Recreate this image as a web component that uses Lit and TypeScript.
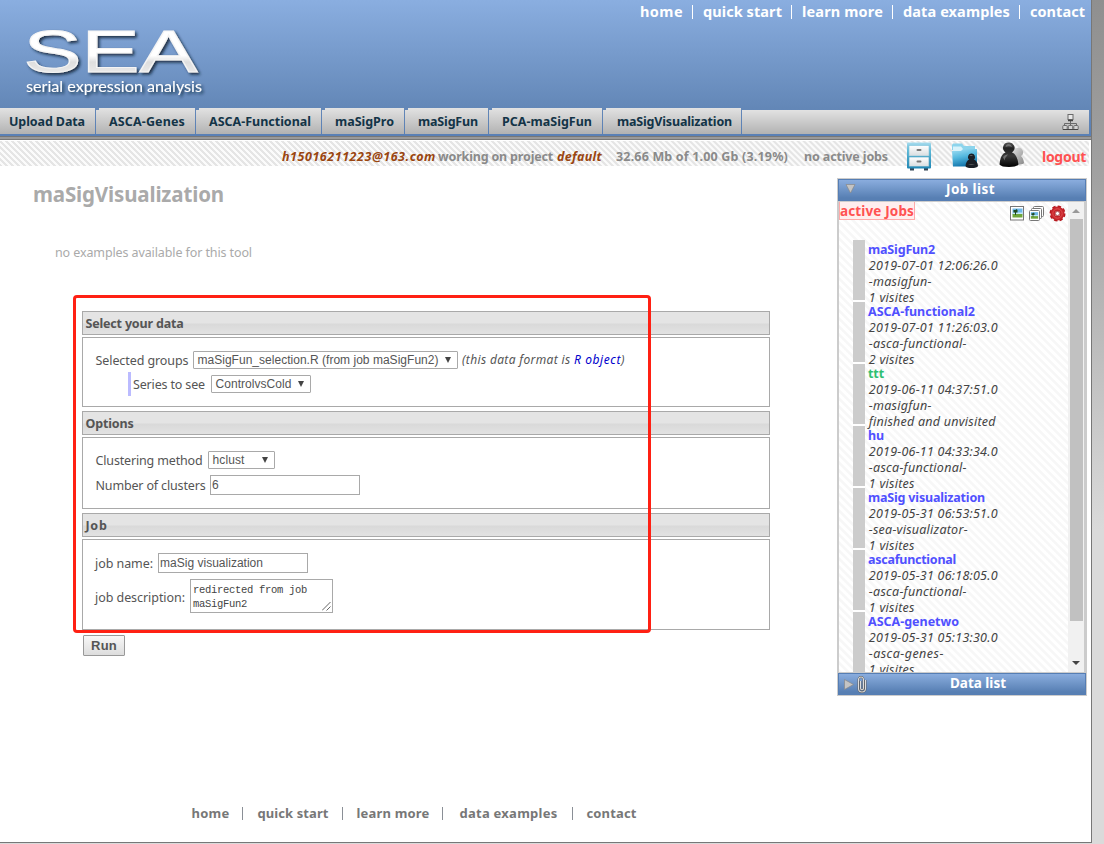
import { LitElement, html, svg, css } from "lit";
import { customElement, property } from "lit/decorators.js";

/** A single line of text whose tracking is adjusted so that it spans a given width. */
@customElement("fit-text")
class FitText extends LitElement {
  @property({ type: Number }) w = 0;
  @property() text = "";

  static styles = css`
    :host { display: inline-block; white-space: pre; flex: none; }
    .t { display: inline-block; }
  `;

  updated() {
    const el = this.renderRoot.querySelector(".t") as HTMLElement;
    el.style.letterSpacing = "0px";
    const natural = el.getBoundingClientRect().width;
    el.style.letterSpacing = (this.w - natural) / this.text.length + "px";
    this.style.width = this.w + "px";
  }

  render() {
    return html`<span class="t">${this.text}</span>`;
  }
}

const fit = (text: string, w: number, cls = "") =>
  html`<fit-text class=${cls} .text=${text} .w=${w}></fit-text>`;

const tabs = [
  { label: "Upload Data", box: 95, pad: 9, w: 76 },
  { label: "ASCA-Genes", box: 99, pad: 13, w: 76 },
  { label: "ASCA-Functional", box: 125, pad: 13, w: 102 },
  { label: "maSigPro", box: 82, pad: 13, w: 59 },
  { label: "maSigFun", box: 83, pad: 13, w: 60 },
  { label: "PCA-maSigFun", box: 113, pad: 13, w: 90 },
  { label: "maSigVisualization", box: 138, pad: 14, w: 115 },
];

const jobs = [
  { name: "maSigFun2", nw: 67, date: "2019-07-01 12:06:26.0", tool: "-masigfun-", tw: 63, state: "1 visites", sw: 46 },
  { name: "ASCA-functional2", nw: 107, date: "2019-07-01 11:26:03.0", tool: "-asca-functional-", tw: 98, state: "2 visites", sw: 46 },
  { name: "ttt", nw: 16, date: "2019-06-11 04:37:51.0", tool: "-masigfun-", tw: 63, state: "finished and unvisited", sw: 127, fresh: true },
  { name: "hu", nw: 16, date: "2019-06-11 04:33:34.0", tool: "-asca-functional-", tw: 98, state: "1 visites", sw: 46 },
  { name: "maSig visualization", nw: 117, date: "2019-05-31 06:53:51.0", tool: "-sea-visualizator-", tw: 99, state: "1 visites", sw: 46 },
  { name: "ascafunctional", nw: 88, date: "2019-05-31 06:18:05.0", tool: "-asca-functional-", tw: 98, state: "1 visites", sw: 46 },
  { name: "ASCA-genetwo", nw: 91, date: "2019-05-31 05:13:30.0", tool: "-asca-genes-", tw: 75, state: "1 visites", sw: 46 },
];

const logo = svg`
<svg width="220" height="84" viewBox="0 0 220 84">
  <defs>
    <linearGradient id="lg" x1="0" y1="0" x2="0" y2="1">
      <stop offset="0.2" stop-color="#fff"/><stop offset="0.56" stop-color="#fff"/>
      <stop offset="0.66" stop-color="#dedede"/><stop offset="0.8" stop-color="#e8e8e8"/>
    </linearGradient>
    <filter id="sh" x="-10%" y="-10%" width="125%" height="135%">
      <feDropShadow dx="2" dy="2" stdDeviation="1.5" flood-color="#0c1a30" flood-opacity="0.85"/>
    </filter>
  </defs>
  <g filter="url(#sh)">
    <text x="8.500" y="51.500" class="sea" textLength="174" lengthAdjust="spacingAndGlyphs" fill="url(#lg)">SEA</text>
  </g>
  <g filter="url(#sh)">
    <text x="11" y="72" class="tag" textLength="176" lengthAdjust="spacingAndGlyphs">serial expression analysis</text>
  </g>
</svg>`;

const sitemap = svg`
<svg width="17" height="17" viewBox="0 0 17 17" fill="#d4d4d4" stroke="#6a6a6a" stroke-width="1">
  <path d="M8.500 7v4M2.500 11V9.500h12V11" fill="none"/>
  <rect x="6" y=".5" width="5" height="5" fill="#e8e8e8"/>
  <path d="M6 6.500h5" stroke="#444" stroke-width="1.500"/>
  <rect x=".8" y="11.500" width="4.400" height="4" rx=".8"/><rect x="6.300" y="11.500" width="4.400" height="4" rx=".8"/><rect x="11.800" y="11.500" width="4.400" height="4" rx=".8"/>
  <path d="M.8 15.500h15.400" stroke="#444"/>
</svg>`;

const cabinet = svg`
<svg width="26" height="29" viewBox="0 0 26 29">
  <defs><linearGradient id="cb" x1="0" y1="0" x2="0" y2="1"><stop offset="0" stop-color="#a8dcee"/><stop offset=".3" stop-color="#5db9d8"/><stop offset="1" stop-color="#1f86b4"/></linearGradient>
  <linearGradient id="cd" x1="0" y1="0" x2="0" y2="1"><stop offset="0" stop-color="#fff"/><stop offset="1" stop-color="#d8dde0"/></linearGradient></defs>
  <rect x="4" y="26" width="4" height="2.500" fill="#345"/><rect x="18" y="26" width="4" height="2.500" fill="#345"/>
  <rect x="1" y="0.500" width="24" height="26" rx="1" fill="url(#cb)"/>
  <rect x="3" y="3.500" width="20" height="10.500" fill="url(#cd)" stroke="#7fc3da" stroke-width=".6"/>
  <rect x="3" y="15" width="20" height="9.500" fill="url(#cd)" stroke="#4a9fc0" stroke-width=".6"/>
  <rect x="10.500" y="7" width="5" height="2" rx="1" fill="#777"/><rect x="10.500" y="18.500" width="5" height="2" rx="1" fill="#777"/>
</svg>`;

const folder = svg`
<svg width="28" height="28" viewBox="0 0 28 28">
  <defs><linearGradient id="fo" x1="0" y1="0" x2=".3" y2="1"><stop offset="0" stop-color="#a5e0f4"/><stop offset=".5" stop-color="#55b9df"/><stop offset="1" stop-color="#1577ad"/></linearGradient></defs>
  <path d="M1 3l1-1.500h9L13 4h11v4H1z" fill="#8cd4ec"/>
  <path d="M2 4.500h8l2 2.500h12v3H2z" fill="#d8f3fb"/>
  <path d="M1 9h9l2-2h14v17.500H2z" fill="url(#fo)"/>
  <path d="M20.500 11.500a3.500 3.500 0 0 1 2.500 6q3.500 1.500 4 6.500-1 2-6.500 2T14.500 24q.500-5 3.500-6.500a3.500 3.500 0 0 1 2.500-6z" fill="#1a1f26"/>
  <path d="M18.500 14q1.500-2 3.500 0zM17 22q3 1.500 7 0" fill="#666"/>
</svg>`;

const pawns = svg`
<svg width="27" height="26" viewBox="0 0 27 26">
  <defs><linearGradient id="pg" x1="0" y1="0" x2="1" y2="1"><stop offset="0" stop-color="#e5e5e5"/><stop offset="1" stop-color="#888"/></linearGradient>
  <linearGradient id="pk" x1="0" y1="0" x2="0" y2="1"><stop offset="0" stop-color="#555"/><stop offset=".25" stop-color="#222"/><stop offset=".55" stop-color="#3a3a3a"/><stop offset="1" stop-color="#000"/></linearGradient></defs>
  <path d="M19 6a4.500 4.500 0 0 1 4 8q2.500 2 3 7-1 1.500-7 1.500L14 14q0-8 5-8z" fill="url(#pg)"/>
  <path d="M10.500.500a5.300 5.300 0 0 1 4.500 9l-1 1 2 1q3.500 3 4.500 11-2 2.500-9.500 2.500T1.500 22.500Q2 15 5.500 11.500l2-1-1-1a5.300 5.300 0 0 1 4-9z" fill="url(#pk)"/>
  <path d="M7.500 5Q8 2 10.500 2T14 5q-3-1.500-6.500 0zM5 15q2-3 5-2.500-3 3-3.500 6z" fill="#888" opacity=".7"/>
</svg>`;

const scene = svg`
  <path d="M2.500 2.500h10v6h-10z" fill="#6eb9ea"/>
  <path d="M2.500 6.500h10v2h-10z" fill="#c6e8f8"/>
  <path d="M2.500 8h10v3.500h-10z" fill="#6ea63a"/>
  <path d="M3.500 4h2l1-1 1 1v2.500H6v2.500H5V6.500H3.500z" fill="#204b20"/>`;

const image = svg`
<svg width="15" height="15" viewBox="0 0 15 15">
  <rect x=".5" y=".5" width="13" height="13.500" fill="#fff" stroke="#777"/>${scene}
</svg>`;

const images = svg`
<svg width="16" height="16" viewBox="0 0 16 16">
  <rect x="4.500" y=".500" width="10" height="10" rx="1" fill="#fff" stroke="#777"/>
  <rect x="2.500" y="2.500" width="10" height="10" rx="1" fill="#fff" stroke="#777"/>
  <rect x=".5" y="4.500" width="10" height="10" rx="1" fill="#fff" stroke="#777"/>
  <g transform="translate(0 4.300) scale(.73)">${scene}</g>
</svg>`;

const gear = svg`
<svg width="17" height="17" viewBox="0 0 17 17">
  <circle cx="8.500" cy="8.500" r="6.700" fill="none" stroke="#b3151b" stroke-width="2.600" stroke-dasharray="3.200 2.060"/>
  <circle cx="8.500" cy="8.500" r="4.800" fill="none" stroke="#c5252b" stroke-width="4.400"/>
  <circle cx="8.500" cy="8.500" r="4.700" fill="none" stroke="#e25050" stroke-width="1"/>
  <circle cx="8.500" cy="8.500" r="2.100" fill="#fff" stroke="#96161a" stroke-width=".8"/>
</svg>`;

const clip = svg`
<svg width="10" height="17" viewBox="0 0 10 17" fill="none">
  <path d="M3.500 5v7q0 1.800 1.500 1.800T6.500 12V4Q6.500 1 4 1T1.500 4v8.500Q1.500 16 5 16t3.500-3.500V4" stroke="#555" stroke-width="1.900"/>
  <path d="M3.500 5v7q0 1.800 1.500 1.800T6.500 12V4Q6.500 1 4 1T1.500 4v8.500Q1.500 16 5 16t3.500-3.500V4" stroke="#ddd" stroke-width="1.100"/>
</svg>`;

@customElement("app-root")
class AppRoot extends LitElement {
  static styles = css`
    :host {
      display: block; position: relative; width: 1104px; height: 844px; overflow: hidden;
      font-family: "Noto Sans", "Open Sans", sans-serif; font-size: 12px; line-height: 16px; color: #555;
      background: linear-gradient(#8f8f8f 0, #a2a2a2 180px, #dadada 530px);
    }
    * { box-sizing: border-box; }
    svg { display: block; flex: none; }
    .page { width: 1092px; height: 843px; background: #fff; border-right: 1px solid #777; border-bottom: 1px solid #777; display: flex; flex-direction: column; }
    .row { display: flex; align-items: flex-start; }
    .head { height: 136px; flex: none; background: linear-gradient(#8aaee0 0, #6387b7 108px, #5a80b5 134px); display: flex; flex-direction: column; }
    .banner { height: 108px; display: flex; justify-content: space-between; }
    .sea { font: 59px "Liberation Sans", sans-serif; stroke: #f4f4f4; stroke-width: 1px; }
    .tag { font: 400 15px "Lato", "Open Sans", sans-serif; fill: #fff; }
    .logo { padding: 20px 0 0 15px; }
    .top { padding: 1px 6px 0 0; font-weight: 700; font-size: 14.500px; line-height: 20px; color: #fff; gap: 9px; }
    .bar { width: 1px; flex: none; background: currentColor; }
    .top .bar { height: 14px; margin: 4px 1px 0 0; }
    .tabs { height: 26px; display: flex; gap: 1px; width: 1089px; }
    .tab { height: 26px; font-weight: 700; font-size: 12.500px; color: #133447; padding-top: 6px; background: linear-gradient(#e2e2e2, #b2b2b2); }
    .tab.notch { clip-path: polygon(3px 0, 100% 0, 100% 100%, 0 100%, 0 2px, 3px 2px); }
    .rest { flex: 1; height: 24px; margin-top: 2px; background: linear-gradient(#e2e2e2, #b2b2b2); display: flex; justify-content: flex-end; padding: 4px 10px 0 0; }
    .rule { height: 4px; flex: none; background: #999; border-top: 1px solid #777; border-bottom: 1px solid #777; }
    .status { height: 25px; margin: 1px 2px 0 0; flex: none; font-weight: 700; font-size: 12.500px; color: #8a8a8a; padding: 8px 0 0 282px;
      background: repeating-linear-gradient(45deg, #e5e5e5 0 1.600px, #fbfbfb 2.100px 3.700px, #e5e5e5 4.240px); }
    .icons { margin-top: -7px; }
    .who { color: #9a4510; font-style: italic; }
    .logout { font-size: 14px; color: #ff5252; margin: 0 0 0 17px; }
    .main { flex: 1; display: flex; align-items: flex-start; }
    .left { width: 837px; flex: none; }
    h1 { margin: 14px 0 0 33px; font-size: 20.500px; line-height: 28px; color: #aaa; height: 28px; }
    .none { margin: 37px 0 0 55px; color: #aaa; height: 16px; font-size: 12.500px; }
    .form { margin: 50px 0 0 82px; width: 688px; display: flex; flex-direction: column; }
    .sec { height: 24px; border: 1px solid #a9a9a9; padding: 4px 2.500px 0; font-weight: 700; font-size: 12.500px; background: linear-gradient(#e4e4e4 0 11px, #d9d9d9 12px, #e2e2e2); }
    .box { border: 1px solid #a9a9a9; margin: 2px 0 4px; padding: 13px 12px 0; }
    .b1 { height: 70px; } .b2 { height: 72px; } .b3 { height: 91px; margin-bottom: 5px; }
    .lab { padding: 2px 0 0 .5px; font-size: 12.500px; }
    .ctl { border: 1px solid #a9a9a9; background: #fff; font: 12px/16px "Liberation Sans", Arial, sans-serif; display: flex; justify-content: space-between; }
    .sel { height: 18px; padding: 0 6px 0 3.500px; border-radius: 1px; }
    .arr { width: 0; height: 0; flex: none; border: 3.500px solid transparent; border-top: 6px solid #444; border-bottom: 0; margin-top: 5px; }
    .inp { height: 20px; width: 150px; padding: 1px 1px; }
    .area { width: 143px; height: 34px; padding: 3px 2px; font: 10.500px/14px "Liberation Mono", monospace; color: #444; }
    .grip { align-self: flex-end; margin: 0 -1px -2px 0; }
    .lines { display: flex; flex-direction: column; }
    .number { margin-top: 6px; }
    .number .lab { padding-top: 3px; }
    .descr { margin-top: 6px; }
    .descr .lab { padding-top: 11px; }
    .b3 .lab { padding-left: 0; }
    .b3 .row:first-child .lab { padding-top: 3px; }
    .series { border-left: 3px solid #bbf; height: 24px; margin: 3px 0 0 33px; padding: 3px 0 0 2px; width: 200px; }
    .series .first { padding-top: 2px; font-size: 12.500px; }
    .hint { font-style: italic; margin: 1px 0 0 4px; }
    .blue { color: #00c; }
    .run { width: 42px; height: 21px; margin-left: 1px; border: 1px solid #999; border-radius: 1px; background: linear-gradient(#f8f8f8, #ddd); font: 700 13px/19px "Liberation Sans", sans-serif; padding-left: 7px; }
    .foot { margin: 148px 0 0 191.500px; font-weight: 700; font-size: 13px; line-height: 18px; color: #777; }
    .foot .bar { height: 13px; margin: 3px 14px 0 12px; background: #8a8f96; }
    .side { width: 250px; height: 518px; margin-top: 12px; border: 1px solid #ccc; display: flex; flex-direction: column; }
    .cap { height: 22px; flex: none; border: 1px solid #567eb4; background: linear-gradient(#8aadde, #577fb3 90%); color: #fff; font-weight: 700; font-size: 13.500px; line-height: 19px; display: flex; align-items: flex-start; }
    .list { height: 472px; border-top: 1px solid #ccc; border-bottom: 1px solid #ccc; display: flex; border-right: 2px solid #ccc; border-left: 1px solid #ccc; overflow: hidden; }
    .jobs { width: 229px; flex: none; background: repeating-linear-gradient(45deg, #f7f7f7 0 1.800px, #fff 2.600px 4.800px, #f7f7f7 5.660px); }
    .active { width: 76px; height: 18px; background: #fee; border: 1px solid #faa; border-top: 0; color: #ff5252; font-weight: 700; font-size: 13.500px; line-height: 19px; }
    .tools { margin-top: 4px; }
    .gear { margin-top: -1px; }
    .job { height: 62px; display: flex; margin-left: 14px; }
    .mark { width: 12px; height: 60px; background: #ccc; margin-right: 3px; box-shadow: 0 2px #fff; }
    .job .lines { height: 62px; font-style: italic; color: #444; padding-top: 2px; font-size: 12.500px; }
    .line { margin-left: .8px; }
    .name { font-weight: 700; font-style: normal; color: #5050ff; }
    .name.fresh { color: #2fbf71; }
    .scroll { width: 17px; height: 470px; background: #f1f1f1; display: flex; flex-direction: column; align-items: center; }
    .up { width: 0; height: 0; border: 4px solid transparent; border-bottom-color: #999; border-top: 0; margin: 7px 0 6px; }
    .thumb { width: 13px; height: 402px; background: #c1c1c1; }
    .down { width: 0; height: 0; border: 4px solid transparent; border-top-color: #444; border-bottom: 0; margin-top: 40px; }
    .clip { margin-top: 2px; }
    .mark-box { position: absolute; left: 73px; top: 295px; width: 578px; height: 338px; border: 3px solid #ff2013; border-radius: 4px; }
  `;

  private select(text: string, tw: number, w: number) {
    return html`<div class="ctl sel" style="width:${w}px">${fit(text, tw)}<span class="arr"></span></div>`;
  }

  render() {
    const bar = html`<span class="bar"></span>`;
    const gap = (n: number) => html`<span style="width:${n}px;flex:none"></span>`;
    return html`
      <div class="page">
        <header class="head">
          <div class="banner">
            <div class="logo">${logo}</div>
            <nav class="row top">
              ${fit("home", 43)}${bar}${fit("quick start", 79)}${bar}${fit("learn more", 81)}${bar}${fit("data examples", 107)}${bar}${fit("contact", 55)}
            </nav>
          </div>
          <nav class="tabs">
            ${tabs.map((t, i) => html`<div class="tab ${i ? "notch" : ""}" style="width:${t.box}px;padding-left:${t.pad}px">${fit(t.label, t.w)}</div>`)}
            <div class="rest">${sitemap}</div>
          </nav>
        </header>
        <div class="rule"></div>
        <div class="row status">
          ${fit("h15016211223@163.com", 154, "who")}${gap(2)}${fit("working on project", 115)}${gap(4)}${fit("default", 45, "who")}${gap(14)}
          ${fit("32.66 Mb of 1.00 Gb (3.19%)", 172)}${gap(16)}${fit("no active jobs", 84)}${gap(18)}
          <div class="row icons">${cabinet}${gap(19)}${folder}${gap(19)}${pawns}</div>
          ${fit("logout", 44, "logout")}
        </div>
        <div class="main">
          <div class="left">
            <h1>${fit("maSigVisualization", 191)}</h1>
            <div class="none">${fit("no examples available for this tool", 197)}</div>
            <div class="form">
              <div class="sec">${fit("Select your data", 98)}</div>
              <div class="box b1">
                <div class="row">${fit("Selected groups", 93, "lab")}${gap(5)}${this.select("maSigFun_selection.R (from job maSigFun2)", 241, 265)}
                  <div class="row hint">${fit("(this data format is ", 112)}${fit("R object", 47, "blue")}${fit(")", 4)}</div></div>
                <div class="row series">${fit("Series to see", 72, "first")}${gap(6)}${this.select("ControlvsCold", 76, 100)}</div>
              </div>
              <div class="sec">${fit("Options", 48)}</div>
              <div class="box b2">
                <div class="row">${fit("Clustering method", 107, "lab")}${gap(6)}${this.select("hclust", 32, 67)}</div>
                <div class="row number">${fit("Number of clusters", 110, "lab")}${gap(5)}<div class="ctl inp">${fit("6", 7)}</div></div>
              </div>
              <div class="sec">${fit("Job", 22)}</div>
              <div class="box b3">
                <div class="row">${fit("job name:", 58, "lab")}${gap(5)}<div class="ctl inp">${fit("maSig visualization", 103)}</div></div>
                <div class="row descr">${fit("job description:", 90, "lab")}${gap(5)}
                  <div class="ctl area"><div class="lines">${fit("redirected from job", 114)}${fit("maSigFun2", 54)}</div>
                    <svg class="grip" width="9" height="9" viewBox="0 0 9 9" stroke="#666" fill="none"><path d="M0 8.500L8.500 0M4.500 8.500L8.500 4.500"/></svg></div></div>
              </div>
              <div class="run">${fit("Run", 26)}</div>
            </div>
            <nav class="row foot">
              ${fit("home", 38)}${bar}${gap(1)}${fit("quick start", 71)}${gap(1)}${bar}${fit("learn more", 73)}${bar}${gap(3)}${fit("data examples", 98)}${gap(2)}${bar}${fit("contact", 50)}
            </nav>
          </div>
          <aside class="side">
            <div class="cap">${gap(6)}<svg width="11" height="18" viewBox="0 0 11 18"><path d="M1 4.500h9L5.500 13z" fill="#c4c4c4" stroke="#888" stroke-width=".7"/></svg>${gap(90)}${fit("Job list", 49)}</div>
            <div class="list">
              <div class="jobs">
                <div class="row" style="height:38px">
                  <div class="active">${fit("active Jobs", 74)}</div>${gap(95)}
                  <div class="row tools">${image}${gap(4)}${images}${gap(4)}<span class="gear">${gear}</span></div>
                </div>
                ${jobs.map((j) => html`<div class="job"><span class="mark"></span><div class="lines">
                  ${fit(j.name, j.nw, j.fresh ? "name fresh" : "name")}${fit(j.date, 129, "line")}${fit(j.tool, j.tw, "line")}${fit(j.state, j.sw, "line")}</div></div>`)}
              </div>
              <div class="scroll"><span class="up"></span><span class="thumb"></span><span class="down"></span></div>
            </div>
            <div class="cap">${gap(5)}<svg width="11" height="20" viewBox="0 0 11 20"><path d="M.500 5.500v10L9.500 10.500z" fill="#c4c4c4" stroke="#888" stroke-width=".7"/></svg>${gap(2)}<span class="clip">${clip}</span>${gap(83)}${fit("Data list", 56)}</div>
          </aside>
        </div>
      </div>
      <div class="mark-box"></div>
    `;
  }
}
